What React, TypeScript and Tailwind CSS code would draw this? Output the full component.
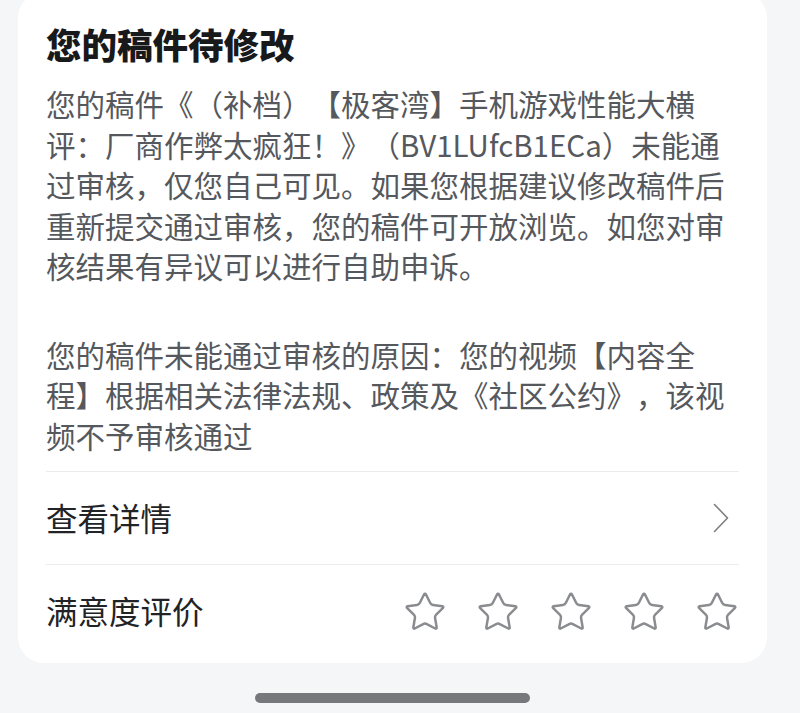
import { Star } from "lucide-react";

const font = { fontFamily: '"Noto Sans CJK SC", "Noto Sans", sans-serif' };

export default function App() {
  return (
    <div
      className="min-h-[713px] w-full overflow-hidden bg-[#f5f6f8] pl-[18px] pr-[33px] [text-spacing-trim:space-all]"
      style={font}
    >
      {/* Card — its top edge is cut off by the screenshot */}
      <div className="-mt-[8px] rounded-[26px] bg-white px-[28px] pt-[28px] pb-[7px]">
        <h1 className="text-[35.5px] font-black leading-[48px] text-[#18191b]">
          您的稿件待修改
        </h1>

        <div className="mt-[15px] text-[29.5px] leading-[40.5px] text-[#55585d]">
          <p>
            您的稿件《（补档）【极客湾】手机游戏性能大横评：厂商作弊太疯狂！》（BV1LUfcB1ECa）未能通过审核，仅您自己可见。如果您根据建议修改稿件后重新提交通过审核，您的稿件可开放浏览。如您对审核结果有异议可以进行自助申诉。
          </p>
          <p className="mt-[48px]">
            您的稿件未能通过审核的原因：您的视频【内容全程】根据相关法律法规、政策及《社区公约》，该视频不予审核通过
          </p>
        </div>

        <div className="mt-[16px] border-t border-[#ececee]">
          <div className="flex h-[92px] items-center justify-between">
            <span className="text-[31.5px] text-[#222326]">查看详情</span>
            <svg
              width="16"
              height="30"
              viewBox="0 0 16 30"
              fill="none"
              stroke="#7d7f83"
              strokeWidth="1.6"
              strokeLinecap="round"
              strokeLinejoin="round"
              className="mr-[10px]"
            >
              <path d="M1.5 1.5 L14.5 15 L1.5 28.5" />
            </svg>
          </div>
          <div className="flex h-[92px] items-center justify-between border-t border-[#ececee]">
            <span className="text-[31.5px] text-[#222326]">满意度评价</span>
            <div className="flex items-center gap-[29px] pt-[2px]">
              {[0, 1, 2, 3, 4].map((i) => (
                <Star
                  key={i}
                  size={44}
                  strokeWidth={1.35}
                  className="text-[#8a8c90]"
                />
              ))}
            </div>
          </div>
        </div>
      </div>

      {/* Home indicator */}
      <div className="mt-[30px] flex justify-center">
        <div className="h-[10px] w-[275px] rounded-full bg-[#77787b]" />
      </div>
    </div>
  );
}
